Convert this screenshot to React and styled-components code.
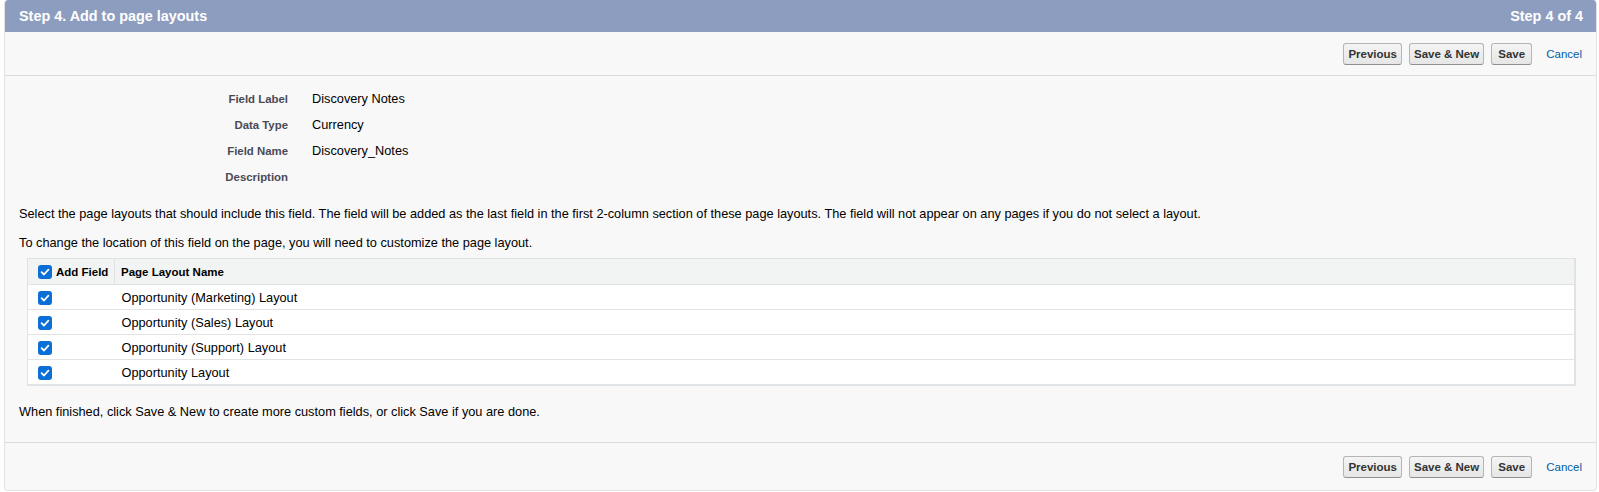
import React from "react";
import styled, { createGlobalStyle } from "styled-components";

const Global = createGlobalStyle`
  body {
    margin: 0;
    background: #ffffff;
    font-family: "Liberation Sans", Arial, sans-serif;
    font-size: 12.75px;
    color: #000000;
  }
`;

const Panel = styled.div`
  margin: 0 2px 0 4px;
  background: #f8f8f8;
  border: 1px solid #e0e3e5;
  border-top: none;
  border-radius: 4px;
  overflow: hidden;
`;

const Header = styled.div`
  display: flex;
  align-items: center;
  justify-content: space-between;
  height: 32px;
  padding: 0 13px 0 14px;
  background: #8d9dbf;
  color: #ffffff;
  font-weight: bold;
  font-size: 14.4px;
`;

const ButtonBar = styled.div`
  display: flex;
  justify-content: flex-end;
  align-items: center;
  gap: 7px;
  height: ${({ bottom }) => (bottom ? "47px" : "43px")};
  padding-right: 14px;
  border-top: ${({ bottom }) => (bottom ? "1px solid #dcdcdc" : "none")};
  border-bottom: ${({ bottom }) => (bottom ? "none" : "1px solid #dcdcdc")};
`;

const Button = styled.button`
  height: 22px;
  min-width: 41px;
  padding: 0 4px;
  font-family: "Liberation Sans", Arial, sans-serif;
  font-size: 11.5px;
  font-weight: bold;
  color: #333333;
  background: linear-gradient(#f4f4f4, #e6e6e6);
  border: 1px solid #b5b5b5;
  border-bottom-color: #8f8f8f;
  border-radius: 3px;
`;

const CancelLink = styled.a`
  margin-left: 7px;
  color: #015ba7;
  font-size: 11.5px;
  text-decoration: none;
`;

const Body = styled.div`
  padding: 12px 14px 22px 14px;
`;

const Details = styled.div`
  display: grid;
  grid-template-columns: 269px auto;
  column-gap: 24px;
  margin-bottom: 14px;
`;

const Label = styled.div`
  text-align: right;
  font-weight: bold;
  font-size: 11.4px;
  color: #4a4a56;
  height: 26px;
  line-height: 22px;
`;

const Value = styled.div`
  height: 26px;
  line-height: 22px;
`;

const Para = styled.p`
  margin: 0 0 ${({ gap }) => gap || "13px"} 0;
  line-height: 16px;
`;

const Table = styled.table`
  width: calc(100% - 14px);
  margin: 0 0 18px 8px;
  border-collapse: collapse;
  border: 1px solid #e0e3e5;
  border-width: 1px 2px 2px 1px;
  background: #ffffff;
`;

const HeadCell = styled.th`
  height: 25px;
  padding: 0 0 0 ${({ first }) => (first ? "10px" : "6px")};
  width: ${({ first }) => (first ? "76px" : "auto")};
  text-align: left;
  font-size: 11.5px;
  font-weight: bold;
  color: #000000;
  background: #f2f3f3;
  border-bottom: 1px solid #e0e3e5;
  border-left: ${({ first }) => (first ? "none" : "1px solid #e0e3e5")};
  white-space: nowrap;
`;

const Cell = styled.td`
  height: 24px;
  padding: 0 0 0 ${({ first }) => (first ? "10px" : "7px")};
  border-bottom: 1px solid #e3e3e3;
`;

const CheckWrap = styled.span`
  display: inline-flex;
  align-items: center;
  gap: 4px;
  vertical-align: middle;
`;

const Box = styled.span`
  display: inline-flex;
  align-items: center;
  justify-content: center;
  width: 14px;
  height: 14px;
  border-radius: 3px;
  background: #0b6fd6;
  vertical-align: middle;
`;

function Check() {
  return (
    <Box>
      <svg width="10" height="10" viewBox="0 0 10 10">
        <path d="M1.6 5.2 L4 7.5 L8.4 2.6" fill="none" stroke="#ffffff" strokeWidth="1.8" strokeLinecap="round" strokeLinejoin="round" />
      </svg>
    </Box>
  );
}

function Buttons({ bottom }) {
  return (
    <ButtonBar bottom={bottom}>
      <Button>Previous</Button>
      <Button>Save &amp; New</Button>
      <Button>Save</Button>
      <CancelLink href="#">Cancel</CancelLink>
    </ButtonBar>
  );
}

const fields = [
  ["Field Label", "Discovery Notes"],
  ["Data Type", "Currency"],
  ["Field Name", "Discovery_Notes"],
  ["Description", ""],
];

const layouts = [
  "Opportunity (Marketing) Layout",
  "Opportunity (Sales) Layout",
  "Opportunity (Support) Layout",
  "Opportunity Layout",
];

export default function App() {
  return (
    <>
      <Global />
      <Panel>
        <Header>
          <span>Step 4. Add to page layouts</span>
          <span>Step 4 of 4</span>
        </Header>
        <Buttons />
        <Body>
          <Details>
            {fields.map(([label, value]) => (
              <React.Fragment key={label}>
                <Label>{label}</Label>
                <Value>{value}</Value>
              </React.Fragment>
            ))}
          </Details>
          <Para>
            Select the page layouts that should include this field. The field will be added as the last field in the first 2-column section of these page layouts. The field will not appear on any pages if you do not select a layout.
          </Para>
          <Para gap="7px">
            To change the location of this field on the page, you will need to customize the page layout.
          </Para>
          <Table>
            <thead>
              <tr>
                <HeadCell first>
                  <CheckWrap>
                    <Check />
                    Add Field
                  </CheckWrap>
                </HeadCell>
                <HeadCell>Page Layout Name</HeadCell>
              </tr>
            </thead>
            <tbody>
              {layouts.map((name) => (
                <tr key={name}>
                  <Cell first>
                    <Check />
                  </Cell>
                  <Cell>{name}</Cell>
                </tr>
              ))}
            </tbody>
          </Table>
          <Para gap="0">
            When finished, click Save &amp; New to create more custom fields, or click Save if you are done.
          </Para>
        </Body>
        <Buttons bottom />
      </Panel>
    </>
  );
}
